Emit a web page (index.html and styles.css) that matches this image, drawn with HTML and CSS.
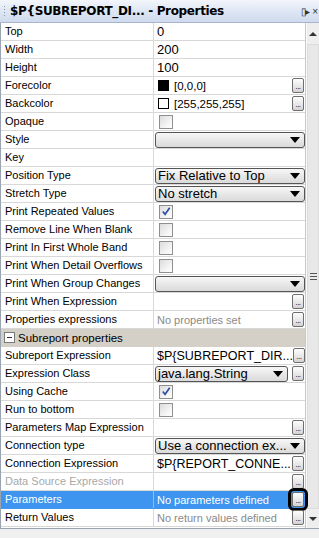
FILE: index.html
```html
<!DOCTYPE html>
<html>
<head>
<meta charset="utf-8">
<link rel="stylesheet" href="styles.css">
</head>
<body>
<div class="panel">
  <div class="header">
    <span class="grip"></span>
    <span class="title">$P{SUBREPORT_DI... - Properties</span>
    <span class="hicons"><span class="pin">▯▸</span><span class="close">×</span></span>
  </div>
  <div class="body">
    <div class="grid">
      <div class="row"><div class="lbl">Top</div><div class="val big">0</div></div>
      <div class="row"><div class="lbl">Width</div><div class="val big">200</div></div>
      <div class="row"><div class="lbl">Height</div><div class="val big">100</div></div>
      <div class="row"><div class="lbl">Forecolor</div><div class="val"><span class="swatch black"></span><span class="ctext">[0,0,0]</span><span class="btn">...</span></div></div>
      <div class="row"><div class="lbl">Backcolor</div><div class="val"><span class="swatch"></span><span class="ctext">[255,255,255]</span><span class="btn">...</span></div></div>
      <div class="row"><div class="lbl">Opaque</div><div class="val"><span class="chk"></span></div></div>
      <div class="row"><div class="lbl">Style</div><div class="val"><span class="combo"><span class="ctxt"></span><span class="arrow"></span></span></div></div>
      <div class="row"><div class="lbl">Key</div><div class="val"></div></div>
      <div class="row"><div class="lbl">Position Type</div><div class="val"><span class="combo"><span class="ctxt">Fix Relative to Top</span><span class="arrow"></span></span></div></div>
      <div class="row"><div class="lbl">Stretch Type</div><div class="val"><span class="combo"><span class="ctxt">No stretch</span><span class="arrow"></span></span></div></div>
      <div class="row"><div class="lbl">Print Repeated Values</div><div class="val"><span class="chk on"><svg viewBox="0 0 13 13" width="13" height="13"><path d="M3 6.5 L5.5 9.5 L10.5 2.5" fill="none" stroke="#2c4fa3" stroke-width="1.8"/></svg></span></div></div>
      <div class="row"><div class="lbl">Remove Line When Blank</div><div class="val"><span class="chk"></span></div></div>
      <div class="row"><div class="lbl">Print In First Whole Band</div><div class="val"><span class="chk"></span></div></div>
      <div class="row"><div class="lbl">Print When Detail Overflows</div><div class="val"><span class="chk"></span></div></div>
      <div class="row"><div class="lbl">Print When Group Changes</div><div class="val"><span class="combo"><span class="ctxt"></span><span class="arrow"></span></span></div></div>
      <div class="row"><div class="lbl">Print When Expression</div><div class="val"><span class="btn">...</span></div></div>
      <div class="row"><div class="lbl">Properties expressions</div><div class="val"><span class="muted">No properties set</span><span class="btn">...</span></div></div>
      <div class="row section"><span class="minus"></span><span class="stitle">Subreport properties</span></div>
      <div class="row"><div class="lbl">Subreport Expression</div><div class="val"><span class="big">$P{SUBREPORT_DIR...</span><span class="btn">...</span></div></div>
      <div class="row"><div class="lbl">Expression Class</div><div class="val"><span class="combo short"><span class="ctxt">java.lang.String</span><span class="arrow"></span></span><span class="btn">...</span></div></div>
      <div class="row"><div class="lbl">Using Cache</div><div class="val"><span class="chk on"><svg viewBox="0 0 13 13" width="13" height="13"><path d="M3 6.5 L5.5 9.5 L10.5 2.5" fill="none" stroke="#2c4fa3" stroke-width="1.8"/></svg></span></div></div>
      <div class="row"><div class="lbl">Run to bottom</div><div class="val"><span class="chk"></span></div></div>
      <div class="row"><div class="lbl">Parameters Map Expression</div><div class="val"><span class="btn">...</span></div></div>
      <div class="row"><div class="lbl">Connection type</div><div class="val"><span class="combo"><span class="ctxt">Use a connection ex...</span><span class="arrow"></span></span></div></div>
      <div class="row"><div class="lbl">Connection Expression</div><div class="val"><span class="big">$P{REPORT_CONNE...</span><span class="btn">...</span></div></div>
      <div class="row"><div class="lbl disabled">Data Source Expression</div><div class="val"><span class="btn">...</span></div></div>
      <div class="row selected"><div class="lbl">Parameters</div><div class="val"><span class="seltext">No parameters defined</span><span class="btn focus">...</span></div></div>
      <div class="row"><div class="lbl">Return Values</div><div class="val"><span class="muted">No return values defined</span><span class="btn">...</span></div></div>
      <div class="fill"></div>
    </div>
    <div class="scroll">
      <div class="sarrow up"></div>
      <div class="thumb"><span class="sgrip"></span></div>
      <div class="sarrow down"></div>
    </div>
  </div>
  <div class="footer"></div>
</div>
</body>
</html>
```
FILE: styles.css
```css
* { box-sizing: border-box; }
html, body { margin: 0; padding: 0; }
body { width: 319px; height: 538px; overflow: hidden; background: #f0f0f0; font-family: "Liberation Sans", Arial, sans-serif; font-size: 11px; color: #000; }
.panel { width: 319px; height: 538px; display: flex; flex-direction: column; }
.header { height: 23px; flex: none; display: flex; align-items: center; background: linear-gradient(#f3f6fb, #dce5f3 55%, #cfdbee); border-bottom: 1px solid #a6b5cc; position: relative; }
.grip { width: 3px; height: 12px; margin-left: 3px; margin-right: 4px; background-image: radial-gradient(circle, #8a94a6 0.8px, transparent 1px); background-size: 3px 3px; }
.title { font-family: "DejaVu Sans", Tahoma, sans-serif; font-weight: bold; font-size: 12px; letter-spacing: -0.35px; white-space: nowrap; }
.hicons { margin-left: auto; display: flex; align-items: center; gap: 4px; font-size: 10px; color: #333; margin-right: 1px; }
.pin { font-size: 10px; letter-spacing: -2px; }
.close { font-size: 10px; }
.body { flex: 1; display: flex; min-height: 0; }
.grid { width: 306px; flex: none; background: #fff; border-left: 1px solid #9aa3b0; border-right: 1px solid #c8c8c8; display: flex; flex-direction: column; }
.row { height: 18px; flex: none; display: flex; border-bottom: 1px solid #d8d8d8; }
.lbl { width: 153px; flex: none; border-right: 1px solid #d8d8d8; padding-left: 4px; line-height: 17px; white-space: nowrap; overflow: hidden; font-size: 11px; }
.lbl.disabled { color: #a8a8a8; }
.val { flex: 1; min-width: 0; display: flex; align-items: center; padding-left: 3px; position: relative; white-space: nowrap; }
.big { font-size: 12.5px; }
.val.big { line-height: 17px; font-size: 13px; }
.swatch { width: 11px; height: 11px; border: 1px solid #000; background: #fff; margin-left: 1px; flex: none; }
.swatch.black { background: #000; }
.ctext { margin-left: 5px; font-size: 11.5px; }
.muted { color: #8a8a8a; font-size: 11px; }
.seltext { color: #fff; font-size: 11px; }
.btn { margin-left: auto; margin-right: 1px; width: 12px; height: 15px; border: 1px solid #6f6f6f; border-radius: 2px; background: linear-gradient(#fdfdfd, #e6e6e6 60%, #d2d2d2); font-size: 8px; text-align: center; color: #000; letter-spacing: -0.5px; flex: none; display: flex; align-items: flex-end; justify-content: center; padding-bottom: 2px; line-height: 6px; }
.btn.focus { outline: 3px solid #000; outline-offset: 1px; }
.chk { width: 14px; height: 14px; margin-left: 2px; border: 1px solid #8f8f8f; background: linear-gradient(135deg, #dcdcdc, #f6f6f6 70%, #fff); flex: none; display: flex; align-items: center; justify-content: center; }
.combo { flex: 1; height: 16px; border: 1px solid #555; border-radius: 3px; background: linear-gradient(#f7f7f7, #e8e8e8 50%, #dadada); display: flex; align-items: center; padding-left: 2px; margin-left: -2px; }
.combo.short { flex: none; width: 133px; margin-right: 2px; }
.ctxt { flex: 1; font-size: 13px; line-height: 14px; white-space: nowrap; overflow: hidden; }
.arrow { width: 0; height: 0; border-left: 5px solid transparent; border-right: 5px solid transparent; border-top: 6px solid #000; margin-right: 4px; flex: none; }
.section { background: #d4d0c8; align-items: center; border-bottom: 1px solid #d4d0c8; }
.minus { width: 11px; height: 11px; border: 1px solid #7a7a7a; background: #fff; margin-left: 3px; margin-right: 3px; position: relative; flex: none; }
.minus::after { content: ""; position: absolute; left: 2px; right: 2px; top: 4px; height: 1px; background: #333; }
.stitle { font-size: 11.5px; }
.selected { background: #3d95f0; border-bottom-color: #3d95f0; }
.selected .lbl { color: #fff; border-right-color: #8cc0f5; }
.fill { flex: 1; }
.scroll { flex: 1; display: flex; flex-direction: column; align-items: center; background: #eeeeee; border-left: 1px solid #fafafa; }
.sarrow { width: 0; height: 0; border-left: 4px solid transparent; border-right: 4px solid transparent; margin: 8px 0; }
.sarrow.up { border-bottom: 4px solid #333; margin-top: 9px; }
.sarrow.down { border-top: 4px solid #333; margin-bottom: 7px; }
.thumb { flex: 1; width: 12px; background: #e8e8e8; border: 1px solid #dcdcdc; display: flex; align-items: center; justify-content: center; }
.sgrip { width: 7px; height: 7px; background: repeating-linear-gradient(#555 0 1px, transparent 1px 3px); }
.footer { height: 10px; flex: none; background: #f0f0f0; border-top: 1px solid #9aa3b0; }
```
